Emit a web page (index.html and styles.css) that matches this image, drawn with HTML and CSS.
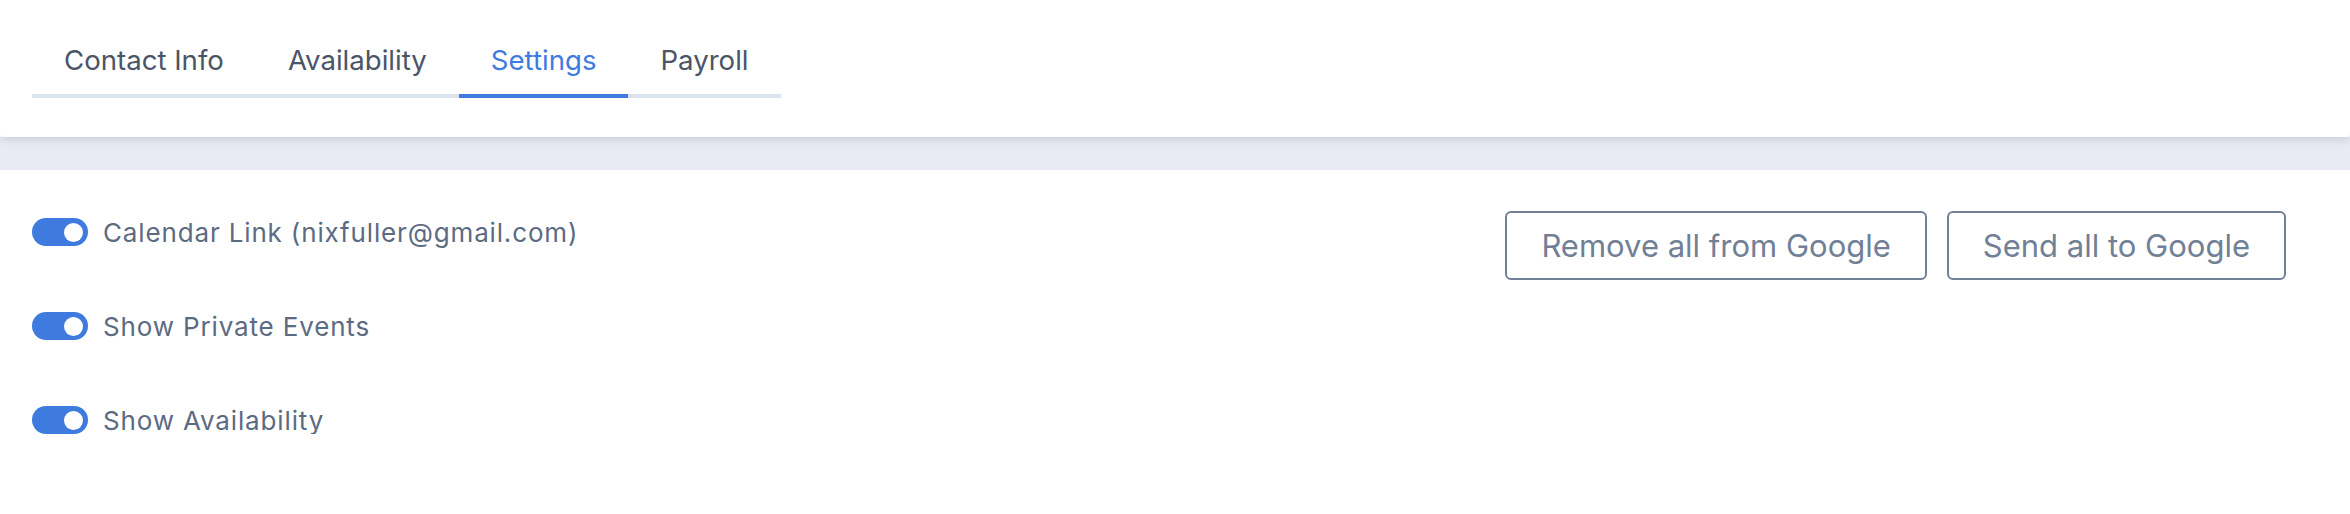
FILE: index.html
```html
<!DOCTYPE html>
<html lang="en">
<head>
    <meta charset="UTF-8">
    <meta name="viewport" content="width=device-width, initial-scale=1.0">
    <title>Profile Settings</title>
    <link rel="stylesheet" href="styles.css">
</head>
<body>

    <div class="header">
        <div class="tabs">
            <div class="tab">Contact Info</div>
            <div class="tab">Availability</div>
            <div class="tab active">Settings</div>
            <div class="tab">Payroll</div>
        </div>
    </div>

    <div class="divider"></div>

    <div class="content">
        <div class="toggles">
            <label class="toggle-row">
                <span class="switch on"><span class="knob"></span></span>
                <span class="label">Calendar Link (nixfuller@gmail.com)</span>
            </label>
            <label class="toggle-row">
                <span class="switch on"><span class="knob"></span></span>
                <span class="label">Show Private Events</span>
            </label>
            <label class="toggle-row">
                <span class="switch on"><span class="knob"></span></span>
                <span class="label">Show Availability</span>
            </label>
        </div>

        <div class="actions">
            <button class="btn">Remove all from Google</button>
            <button class="btn">Send all to Google</button>
        </div>
    </div>

</body>
</html>
```

FILE: styles.css
```css
body {
    font-family: Inter, "Noto Sans", sans-serif;
    margin: 0;
    padding: 0;
    background-color: #ffffff;
}

.header {
    position: relative;
    z-index: 1;
    background-color: #ffffff;
    padding: 42px 32px 39px;
    border-radius: 0 0 4px 4px;
    box-shadow: 0 2px 10px rgba(40, 50, 80, 0.18);
}

.tabs {
    display: inline-flex;
    border-bottom: 4px solid #dae3ee;
}

.tab {
    padding: 0 32px 16px;
    margin-bottom: -4px;
    border-bottom: 4px solid transparent;
    font-size: 27.6px;
    line-height: 36px;
    color: #4a5568;
    cursor: pointer;
}

.tab.active {
    color: #3f7bdf;
    border-bottom-color: #3f7bdf;
}

.divider {
    height: 33px;
    background-color: #e8ebf3;
}

.content {
    display: flex;
    justify-content: space-between;
    align-items: flex-start;
    padding: 41px 64px 0 32px;
}

.toggles {
    display: flex;
    flex-direction: column;
    gap: 66px;
    padding-top: 7px;
}

.toggle-row {
    display: flex;
    align-items: center;
    gap: 15px;
    height: 28px;
    cursor: pointer;
}

.switch {
    display: flex;
    align-items: center;
    justify-content: flex-end;
    width: 56px;
    height: 28px;
    padding: 0 5px;
    box-sizing: border-box;
    border-radius: 14px;
    background-color: #d0d7e1;
}

.switch.on {
    background-color: #3f7bdf;
}

.knob {
    width: 19px;
    height: 19px;
    border-radius: 50%;
    background-color: #ffffff;
}

.label {
    font-size: 26px;
    color: #5c6b82;
    letter-spacing: 0.85px;
}

.actions {
    display: flex;
    gap: 20px;
}

.btn {
    font-family: Inter, "Noto Sans", sans-serif;
    font-size: 31px;
    color: #718096;
    background-color: #ffffff;
    border: 2px solid #718096;
    border-radius: 6px;
    padding: 14px 34px;
    cursor: pointer;
}
```
